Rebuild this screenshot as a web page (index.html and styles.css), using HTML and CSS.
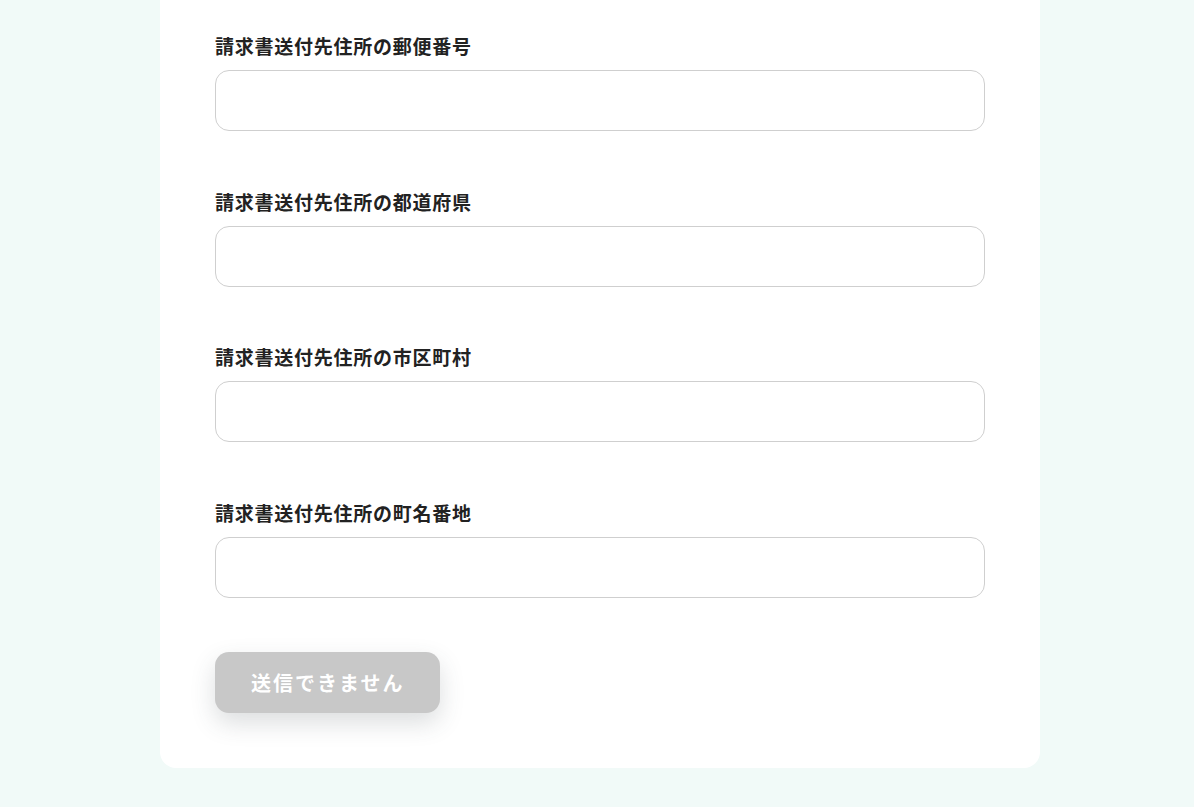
FILE: index.html
```html
<!DOCTYPE html>
<html lang="ja">
<head>
<meta charset="utf-8">
<link rel="stylesheet" href="styles.css">
</head>
<body>
<main class="card">
  <form class="form">
    <div class="field">
      <label class="label">請求書送付先住所の郵便番号</label>
      <input class="input" type="text">
    </div>
    <div class="field">
      <label class="label">請求書送付先住所の都道府県</label>
      <input class="input" type="text">
    </div>
    <div class="field">
      <label class="label">請求書送付先住所の市区町村</label>
      <input class="input" type="text">
    </div>
    <div class="field">
      <label class="label">請求書送付先住所の町名番地</label>
      <input class="input" type="text">
    </div>
    <div class="actions">
      <button class="submit" type="button" disabled>送信できません</button>
    </div>
  </form>
</main>
</body>
</html>
```
FILE: styles.css
```css
html, body {
  margin: 0;
  padding: 0;
}
body {
  background: #f1faf8;
  font-family: "Noto Sans CJK JP", "Noto Sans", sans-serif;
  color: #222;
  height: 807px;
  overflow: hidden;
  padding-left: 6px;
  box-sizing: border-box;
}
.card {
  width: 880px;
  margin: 0 auto;
  background: #fff;
  border-radius: 0 0 16px 16px;
  padding: 32px 55px 55px;
  box-sizing: border-box;
}
.form {
  display: flex;
  flex-direction: column;
}
.field {
  display: flex;
  flex-direction: column;
  gap: 10px;
  margin-bottom: 56.67px;
}
.field:nth-child(4) {
  margin-bottom: 54px;
}
.label {
  font-size: 19px;
  line-height: 28px;
  font-weight: 700;
  letter-spacing: 0.04em;
  color: #222;
}
.input {
  display: block;
  width: 100%;
  height: 61px;
  box-sizing: border-box;
  border: 1px solid #cfcfcf;
  border-radius: 14px;
  background: #fff;
  font-size: 18px;
  padding: 0 16px;
  margin: 0;
}
.actions {
  display: flex;
}
.submit {
  height: 61px;
  padding: 0 36px;
  border: none;
  border-radius: 14px;
  background: #c8c8c8;
  color: #fff;
  font-family: "Noto Sans CJK JP", "Noto Sans", sans-serif;
  font-size: 20px;
  font-weight: 700;
  letter-spacing: 0.1em;
  box-shadow: 0 10px 25px rgba(60, 70, 80, 0.18);
  cursor: default;
}
```
